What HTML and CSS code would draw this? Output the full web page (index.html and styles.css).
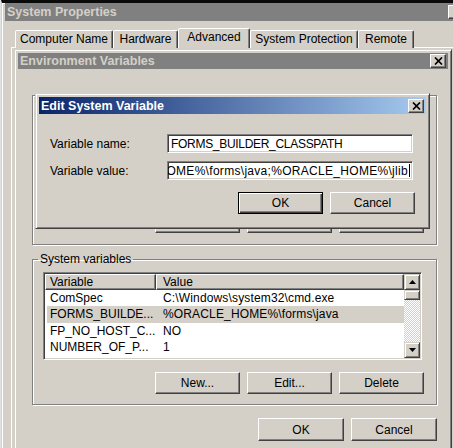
FILE: index.html
```html
<!DOCTYPE html>
<html>
<head>
<meta charset="utf-8">
<title>Edit System Variable</title>
<link rel="stylesheet" href="styles.css">
</head>
<body>
<div class="win sysprops">
  <div class="title inactive big">
    <span class="ttext">System Properties</span>
    <span class="xbtn partial"></span>
  </div>
  <div class="tabs">
    <div class="tab t1">Computer Name</div>
    <div class="tab t2">Hardware</div>
    <div class="tab t3 sel">Advanced</div>
    <div class="tab t4">System Protection</div>
    <div class="tab t5">Remote</div>
  </div>
  <div class="tabpane"></div>
</div>

<div class="win envwin">
  <div class="title inactive">
    <span class="ttext">Environment Variables</span>
    <span class="xbtn"><svg width="9" height="8" viewBox="0 0 9 8"><path d="M1 .5l7 7M8 .5l-7 7" stroke="#000" stroke-width="1.7" fill="none"/></svg></span>
  </div>
  <div class="envbody">
    <div class="etched usergroup">
      <div class="btnrow">
        <div class="btn">New...</div>
        <div class="btn">Edit...</div>
        <div class="btn">Delete</div>
      </div>
    </div>
    <fieldset class="etched sysgroup">
      <legend>System variables</legend>
      <div class="list">
        <div class="lvmain">
          <div class="lvhead">
            <div class="hcell c1">Variable</div>
            <div class="hcell c2">Value</div>
          </div>
          <div class="row"><div class="cell c1">ComSpec</div><div class="cell c2">C:\Windows\system32\cmd.exe</div></div>
          <div class="row selrow"><div class="cell c1">FORMS_BUILDE...</div><div class="cell c2">%ORACLE_HOME%\forms\java</div></div>
          <div class="row"><div class="cell c1">FP_NO_HOST_C...</div><div class="cell c2">NO</div></div>
          <div class="row"><div class="cell c1">NUMBER_OF_P...</div><div class="cell c2">1</div></div>
          <div class="row"><div class="cell c1">OS</div><div class="cell c2">Windows_NT</div></div>
        </div>
        <div class="vscroll">
          <div class="sbtn"><svg width="7" height="4" viewBox="0 0 7 4"><polygon points="0,4 7,4 3.5,0" fill="#000"/></svg></div>
          <div class="thumb"></div>
          <div class="track"></div>
          <div class="sbtn"><svg width="7" height="4" viewBox="0 0 7 4"><polygon points="0,0 7,0 3.5,4" fill="#000"/></svg></div>
        </div>
      </div>
      <div class="btnrow">
        <div class="btn">New...</div>
        <div class="btn">Edit...</div>
        <div class="btn">Delete</div>
      </div>
    </fieldset>
    <div class="btnrow bottomrow">
      <div class="btn wide">OK</div>
      <div class="btn wide">Cancel</div>
    </div>
  </div>
</div>

<div class="win editdlg">
  <div class="title active">
    <span class="ttext">Edit System Variable</span>
    <span class="xbtn"><svg width="9" height="8" viewBox="0 0 9 8"><path d="M1 .5l7 7M8 .5l-7 7" stroke="#000" stroke-width="1.7" fill="none"/></svg></span>
  </div>
  <div class="ebody">
    <div class="frow first">
      <div class="flabel">Variable name:</div>
      <div class="input"><span class="itext name">FORMS_BUILDER_CLASSPATH</span></div>
    </div>
    <div class="frow">
      <div class="flabel">Variable value:</div>
      <div class="input scrolled"><span class="itext value">OME%\forms\java;%ORACLE_HOME%\jlib</span><span class="caret"></span></div>
    </div>
    <div class="btnrow ebtns">
      <div class="btn default">OK</div>
      <div class="btn">Cancel</div>
    </div>
  </div>
</div>
</body>
</html>
```

FILE: styles.css
```css
* { box-sizing: border-box; }

body {
  margin: 0;
  width: 453px;
  height: 448px;
  overflow: hidden;
  position: relative;
  background: #e2e2e2;
  font-family: "Liberation Sans", Arial, sans-serif;
  font-size: 12px;
  color: #000;
}

.win {
  position: absolute;
  background: #d4d0c8;
  border: 1px solid;
  border-color: #d4d0c8 #404040 #404040 #d4d0c8;
  box-shadow: inset 1px 1px #fff, inset -1px -1px #808080;
  padding: 3px;
}

/* title bars */
.title {
  display: flex;
  align-items: center;
  height: 16px;
  padding: 0 2px 0 2px;
  font-weight: bold;
  font-size: 12.5px;
  white-space: nowrap;
}
.title .ttext { flex: 1; overflow: hidden; }
.title.inactive { background: #808080; color: #d4d0c8; }
.title.active { background: linear-gradient(90deg, #0a246a, #a6caf0); color: #fff; }
.title.big { height: 18px; }

.xbtn {
  width: 16px;
  height: 14px;
  display: flex;
  align-items: center;
  justify-content: center;
  background: #d4d0c8;
  border: 1px solid;
  border-color: #fff #404040 #404040 #fff;
  box-shadow: inset -1px -1px #808080;
  flex: none;
}
.xbtn.partial { margin-right: 11px; }

/* System Properties */
.sysprops {
  left: 1px;
  top: 0;
  width: 480px;
  height: 470px;
  border-top: 3px solid #0a0a0a;
  padding-top: 0;
}
.tabs {
  display: flex;
  align-items: flex-end;
  height: 20px;
  margin: 7px 0 0 10px;
  position: relative;
  z-index: 1;
}
.tab {
  height: 18px;
  line-height: 17px;
  text-align: center;
  border: 1px solid;
  border-bottom: 0;
  border-color: #fff #404040 transparent #fff;
  box-shadow: inset -1px 0 #808080;
  border-radius: 2px 2px 0 0;
  background: #d4d0c8;
}
.t1 { width: 98px; }
.t2 { width: 65px; }
.t3 { width: 72px; }
.t4 { width: 108px; }
.t5 { width: 56px; }
.tab.sel { height: 20px; line-height: 16px; }
.tabpane {
  margin: -1px 0 0 6px;
  height: 420px;
  border: 1px solid;
  border-color: #fff #404040 #404040 #fff;
}

/* Environment Variables */
.envwin {
  left: 14px;
  top: 49px;
  width: 438px;
  height: 420px;
}
.envbody { padding: 0 11px 0 14px; }

.etched {
  border: 1px solid #808080;
  box-shadow: inset 1px 1px #fff, 1px 1px #fff;
}
.usergroup {
  margin-top: 26px;
  height: 150px;
  display: flex;
  flex-direction: column;
  justify-content: flex-end;
  padding: 0 12px 11px 0;
}
.btnrow {
  display: flex;
  justify-content: flex-end;
  gap: 7px;
}
.btn {
  width: 85px;
  height: 22px;
  display: flex;
  align-items: center;
  justify-content: center;
  background: #d4d0c8;
  border: 1px solid;
  border-color: #fff #404040 #404040 #fff;
  box-shadow: inset -1px -1px #808080;
}
.btn.wide { width: 86px; height: 23px; }
.btn.default {
  border: 1px solid #000;
  box-shadow: inset 1px 1px #fff, inset -1px -1px #404040, inset -2px -2px #808080;
}

.sysgroup {
  margin: 7px 0 0 0;
  padding: 0 12px 10px 5px;
  min-width: 0;
}
.sysgroup legend {
  padding: 0 2px;
  line-height: 14px;
}
.list {
  margin: 6px 2px 0 5px;
  height: 88px;
  display: flex;
  background: #fff;
  border: 1px solid;
  border-color: #808080 #fff #fff #808080;
  box-shadow: inset 1px 1px #404040, inset -1px -1px #d4d0c8;
  padding: 1px;
  overflow: hidden;
}
.lvmain { flex: 1; overflow: hidden; }
.lvhead { display: flex; height: 16px; }
.hcell {
  height: 16px;
  line-height: 14px;
  background: #d4d0c8;
  border: 1px solid;
  border-color: #fff #404040 #404040 #fff;
  box-shadow: inset -1px -1px #808080;
  white-space: nowrap;
}
.hcell.c1 { width: 111px; padding-left: 4px; }
.hcell.c2 { flex: 1; padding-left: 6px; }
.row {
  display: flex;
  height: 16.4px;
  line-height: 16px;
  margin-left: 2px;
  white-space: nowrap;
}
.row.selrow { background: #d4d0c8; }
.cell.c1 { width: 109px; padding-left: 3px; }
.cell.c2 { flex: 1; padding-left: 7px; letter-spacing: 0.15px; }

.vscroll {
  width: 16px;
  display: flex;
  flex-direction: column;
}
.sbtn {
  height: 16px;
  display: flex;
  align-items: center;
  justify-content: center;
  background: #d4d0c8;
  border: 1px solid;
  border-color: #d4d0c8 #404040 #404040 #d4d0c8;
  box-shadow: inset 1px 1px #fff, inset -1px -1px #808080;
  flex: none;
}
.thumb {
  height: 10px;
  background: #d4d0c8;
  border: 1px solid;
  border-color: #d4d0c8 #404040 #404040 #d4d0c8;
  box-shadow: inset 1px 1px #fff, inset -1px -1px #808080;
  flex: none;
}
.track {
  flex: 1;
  background: repeating-conic-gradient(#d4d0c8 0 25%, #fff 0 50%) 0 0 / 2px 2px;
}
.sysgroup .btnrow { margin-top: 12px; }
.bottomrow { margin-top: 13px; }

/* Edit System Variable */
.editdlg {
  left: 35px;
  top: 93px;
  width: 395px;
  height: 136px;
}
.editdlg .title { height: 17px; }
.ebody { padding: 0 13px 0 11px; }
.frow { display: flex; align-items: center; margin-top: 8px; }
.frow.first { margin-top: 20px; }
.flabel { width: 117px; }
.input {
  flex: 1;
  height: 19px;
  display: flex;
  align-items: center;
  background: #fff;
  border: 1px solid;
  border-color: #808080 #fff #fff #808080;
  box-shadow: inset 1px 1px #404040, inset -1px -1px #d4d0c8;
  padding: 0 2px 0 3px;
  overflow: hidden;
  white-space: nowrap;
}
.input.scrolled { justify-content: flex-end; padding-left: 2px; }
.itext { flex: none; }
.itext.name { letter-spacing: -0.3px; }
.itext.value { letter-spacing: 0.3px; }
.caret {
  flex: none;
  width: 1px;
  height: 13px;
  background: #000;
  margin-left: 1px;
}
.ebtns { margin-top: 12px; margin-right: -2px; }
```
